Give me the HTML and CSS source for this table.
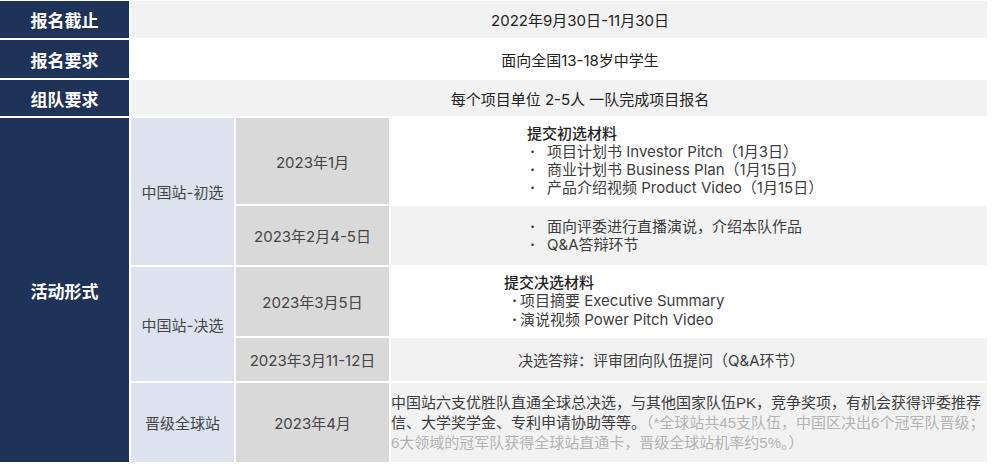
FILE: index.html
```html
<!DOCTYPE html>
<html lang="zh">
<head>
<meta charset="utf-8">
<title>赛程安排</title>
<link rel="stylesheet" href="styles.css">
</head>
<body>
<table class="info">
  <colgroup>
    <col class="c1"><col class="c2"><col class="c3"><col class="c4">
  </colgroup>
  <tr class="r1">
    <th>报名截止</th>
    <td colspan="3" class="top gray">2022年9月30日-11月30日</td>
  </tr>
  <tr class="r2">
    <th>报名要求</th>
    <td colspan="3" class="top white">面向全国13-18岁中学生</td>
  </tr>
  <tr class="r3">
    <th>组队要求</th>
    <td colspan="3" class="top gray">每个项目单位 2-5人 一队完成项目报名</td>
  </tr>
  <tr class="r4">
    <th rowspan="5">活动形式</th>
    <td rowspan="2" class="stage">中国站-初选</td>
    <td class="date">2023年1月</td>
    <td class="content white pa">
      <div class="head">提交初选材料</div>
      <div class="item"><span class="dot">·</span>项目计划书 Investor Pitch（1月3日）</div>
      <div class="item"><span class="dot">·</span>商业计划书 Business Plan（1月15日）</div>
      <div class="item"><span class="dot">·</span>产品介绍视频 Product Video（1月15日）</div>
    </td>
  </tr>
  <tr class="r5">
    <td class="date">2023年2月4-5日</td>
    <td class="content gray pa">
      <div class="item"><span class="dot">·</span>面向评委进行直播演说，介绍本队作品</div>
      <div class="item"><span class="dot">·</span>Q&amp;A答辩环节</div>
    </td>
  </tr>
  <tr class="r6">
    <td rowspan="2" class="stage">中国站-决选</td>
    <td class="date">2023年3月5日</td>
    <td class="content white pc">
      <div class="head">提交决选材料</div>
      <div class="item"><span class="dot dot-s">·</span>项目摘要 Executive Summary</div>
      <div class="item"><span class="dot dot-s">·</span>演说视频 Power Pitch Video</div>
    </td>
  </tr>
  <tr class="r7">
    <td class="date">2023年3月11-12日</td>
    <td class="content gray pd">决选答辩：评审团向队伍提问（Q&amp;A环节）</td>
  </tr>
  <tr class="r8">
    <td class="stage">晋级全球站</td>
    <td class="date">2023年4月</td>
    <td class="content gray pe">中国站六支优胜队直通全球总决选，与其他国家队伍PK，竞争奖项，有机会获得评委推荐信、大学奖学金、专利申请协助等等。<span class="note">（*全球站共45支队伍，中国区决出6个冠军队晋级；6大领域的冠军队获得全球站直通卡，晋级全球站机率约5%。）</span></td>
  </tr>
</table>
</body>
</html>
```

FILE: styles.css
```css
html, body {
  margin: 0;
  padding: 0;
  background: #ffffff;
}

body {
  font-family: Inter, "Noto Sans CJK SC", sans-serif;
  overflow: hidden;
}

.info {
  border-collapse: separate;
  border-spacing: 2px;
  table-layout: fixed;
  width: 991px;
  margin: -1px 0 0 -2px;
}

col.c1 { width: 129px; }
col.c2 { width: 103px; }
col.c3 { width: 153px; }
col.c4 { width: 596px; }

tr.r1 { height: 37px; }
tr.r2 { height: 38px; }
tr.r3 { height: 36px; }
tr.r4 { height: 86px; }
tr.r5 { height: 59px; }
tr.r6 { height: 69px; }
tr.r7 { height: 43px; }
tr.r8 { height: 79px; }

th {
  background: #1f3358;
  color: #ffffff;
  font-size: 17px;
  font-weight: 700;
  padding: 0;
  text-align: center;
  vertical-align: middle;
}

td {
  padding: 0;
  font-size: 15px;
  color: #3d3d3d;
  vertical-align: middle;
}

.top {
  text-align: center;
  padding-left: 42px;
  color: #222222;
}

.stage {
  background: #dce3ef;
  text-align: center;
  color: #454545;
}

.date {
  background: #d9d9d9;
  text-align: center;
  color: #454545;
}

.gray { background: #f2f2f2; }
.white { background: #ffffff; }

.content { text-align: left; }

.head {
  font-weight: 500;
  color: #222222;
}

.dot {
  display: inline-block;
  width: 20px;
  padding-left: 3px;
  box-sizing: border-box;
  font-weight: 700;
}

.dot-s {
  width: 16px;
  padding-left: 8px;
}

.pa {
  padding-left: 136px;
  line-height: 18px;
}

.pc {
  padding-left: 113px;
  line-height: 18.5px;
}

.pd {
  padding-left: 127px;
}

.pe {
  line-height: 20px;
  font-family: "Liberation Sans", "Noto Sans CJK SC", sans-serif;
}

.note {
  color: #b3b3b3;
}
```
